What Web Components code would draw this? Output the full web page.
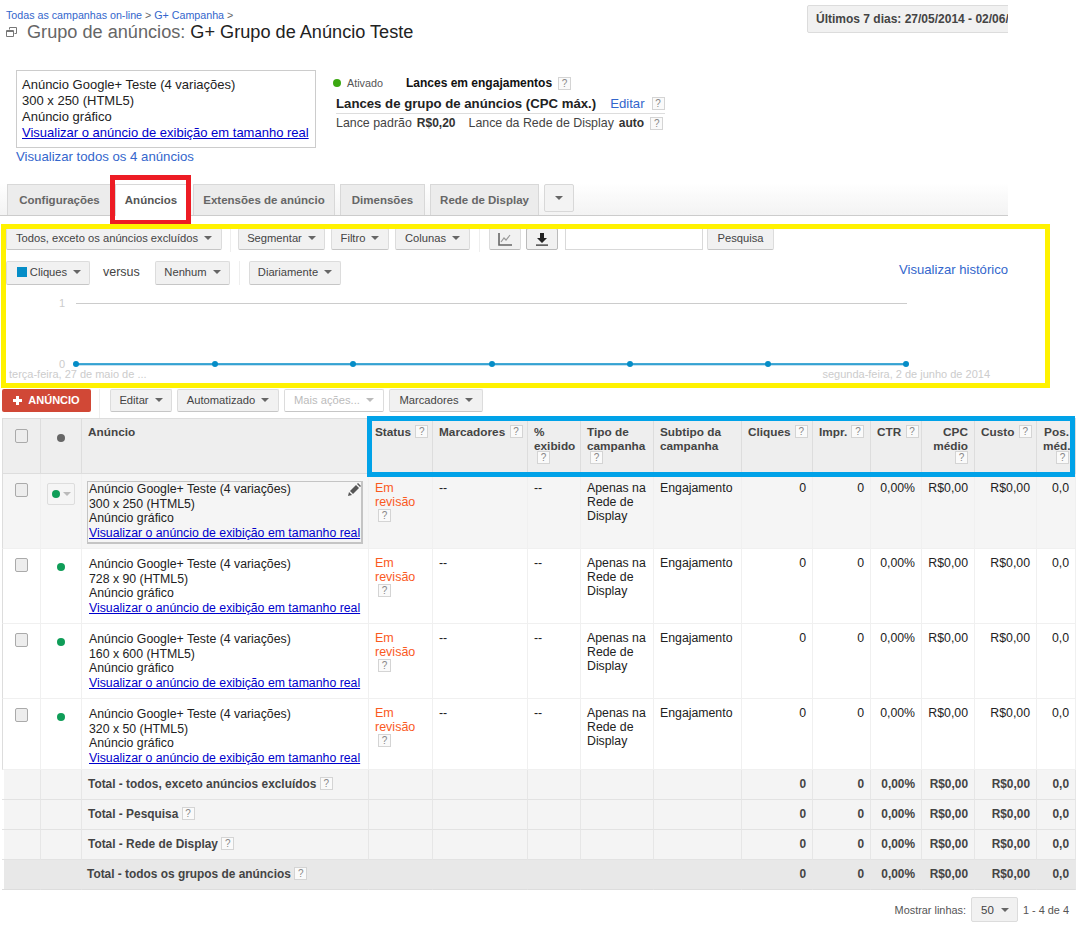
<!DOCTYPE html>
<html lang="pt-BR">
  <head>
    <meta charset="UTF-8" />
    <title>Grupo de anúncios</title>
    <style>
      body {
        margin: 0;
        background: #fff;
        font: 12px "Liberation Sans", Arial, sans-serif;
        color: #222;
      }
      #page {
        position: relative;
        width: 1076px;
        height: 933px;
        overflow: hidden;
      }
    </style>
  </head>
  <body>
    <div id="page">
      <ad-header></ad-header>
      <ad-summary></ad-summary>
      <ad-tabs></ad-tabs>
      <ad-chart-panel></ad-chart-panel>
      <ad-actions></ad-actions>
      <ad-table></ad-table>
      <ad-footer></ad-footer>
      <mark-rect style="left: 110px; top: 175px; width: 81px; height: 50px; color: #ed1c24"></mark-rect>
      <mark-rect style="left: 1px; top: 224px; width: 1049px; height: 164px; color: #fff200"></mark-rect>
      <mark-rect style="left: 367px; top: 416px; width: 708px; height: 61px; color: #00a2e8"></mark-rect>
    </div>

    <script>
      // small helper, every element gets an open shadow root with its markup
      function comp(name, html) {
        customElements.define(
          name,
          class extends HTMLElement {
            constructor() {
              super();
              this.attachShadow({ mode: "open" }).innerHTML = html;
            }
          }
        );
      }

      comp(
        "mark-rect",
        `<style>
          :host { position: absolute; box-sizing: border-box; border: 5px solid currentColor; }
        </style>`
      );

      comp(
        "help-mark",
        `<style>
          :host {
            display: inline-block; box-sizing: border-box; width: 13px; height: 13px;
            border: 1px solid #d4d4d4; background: #fafafa; color: #888;
            font: 10px/11px "Liberation Sans", Arial, sans-serif; text-align: center;
            vertical-align: top; font-weight: normal;
          }
        </style>?`
      );

      comp(
        "status-dot",
        `<style>
          :host { display: inline-block; width: 8px; height: 8px; border-radius: 50%; background: #0f9d58; }
        </style>`
      );

      comp(
        "drop-arrow",
        `<style>
          :host {
            display: inline-block; width: 0; height: 0; margin-left: 6px; vertical-align: middle;
            border-left: 4px solid transparent; border-right: 4px solid transparent;
            border-top: 4px solid #666;
          }
        </style>`
      );

      comp(
        "drop-button",
        `<style>
          :host {
            display: flex; box-sizing: border-box; height: 24px; flex: none; padding-bottom: 2px;
            align-items: center; justify-content: center; white-space: nowrap;
            background: #f1f1f1; border: 1px solid #dcdcdc; border-bottom-color: #c6c6c6;
            border-radius: 2px; color: #444;
            font: 11.2px "Liberation Sans", Arial, sans-serif;
          }
          :host([disabled]) { background: #fff; color: #bbb; }
          :host([flat]) { height: 22px; }
        </style><slot></slot>`
      );

      comp(
        "ad-header",
        `<style>
          :host { display: flex; width: 1008px; height: 62px; overflow: hidden; }
          .left { flex: none; width: 807px; padding: 9px 0 0 6px; box-sizing: border-box; }
          .crumbs { font-size: 10.7px; line-height: 13px; color: #666; }
          .crumbs a { color: #36c; text-decoration: none; }
          h1 { display: flex; align-items: center; margin: 0; font-size: 18.15px; font-weight: normal; line-height: 20px; color: #222; }
          h1 svg { margin: 1px 10px 0 0; }
          h1 span { color: #666; margin-right: 5px; }
          .date {
            flex: none; box-sizing: border-box; height: 28px; margin-top: 5px; padding: 0 8px;
            background: #f1f1f1; border: 1px solid #dcdcdc; border-radius: 2px;
            font-size: 12px; font-weight: bold; line-height: 26px; color: #444; white-space: nowrap;
          }
        </style>
        <div class="left">
          <div class="crumbs"><a>Todas as campanhas on-line</a> &gt; <a>G+ Campanha</a> &gt;</div>
          <h1>
            <svg width="11" height="11" viewBox="0 0 11 11" fill="none" stroke="#777">
              <path d="M3.5 2.5V.5h7v6H8.5" />
              <path d="M.5 3.5h7v6h-7z" />
              <path d="M.5 4.5h7" />
            </svg>
            <span>Grupo de anúncios:</span> G+ Grupo de Anúncio Teste
          </h1>
        </div>
        <div class="date">Últimos 7 dias: 27/05/2014 - 02/06/2014</div>`
      );

      comp(
        "ad-summary",
        `<style>
          :host { display: flex; width: 1008px; height: 121px; box-sizing: border-box; padding: 8px 0 0 16px; font-size: 12px; }
          .box {
            box-sizing: border-box; width: 300px; height: 78px; padding: 6px 5px;
            border: 1px solid #ccc; font-size: 13px; line-height: 16px; white-space: nowrap; color: #222;
          }
          .box a { color: #00c; text-decoration: underline; }
          .all { display: block; margin-top: 1px; font-size: 13.2px; line-height: 16px; color: #36c; }
          .info { margin-left: 20px; width: 329px; white-space: nowrap; }
          .state { display: flex; align-items: center; box-sizing: border-box; height: 24px; padding-top: 2px; }
          .state status-dot { background: #3ba811; margin-left: -3px; }
          .state .on { margin-left: 6px; width: 59px; font-size: 10.8px; color: #555; }
          .state b { margin-right: 6px; color: #111; }
          .bid {
            display: flex; align-items: center; height: 19px; border-bottom: 1px solid #ddd;
            font-size: 13.2px; font-weight: bold; color: #222;
          }
          .bid a { margin: 0 7px 0 14px; font-weight: normal; color: #36c; }
          .def { display: flex; align-items: center; margin-top: 1px; height: 16px; font-size: 12.4px; color: #444; }
          .def b { margin-left: 5px; font-size: 12px; color: #333; }
          .def span { margin-left: 13px; }
          .def help-mark { margin-left: 6px; }
        </style>
        <div>
          <div class="box">
            Anúncio Google+ Teste (4 variações)<br />
            300 x 250 (HTML5)<br />
            Anúncio gráfico<br />
            <a>Visualizar o anúncio de exibição em tamanho real</a>
          </div>
          <a class="all">Visualizar todos os 4 anúncios</a>
        </div>
        <div class="info">
          <div class="state"><status-dot></status-dot><span class="on">Ativado</span><b>Lances em engajamentos</b><help-mark></help-mark></div>
          <div class="bid">Lances de grupo de anúncios (CPC máx.)<a>Editar</a><help-mark></help-mark></div>
          <div class="def">Lance padrão<b>R$0,20</b><span>Lance da Rede de Display</span><b>auto</b><help-mark></help-mark></div>
        </div>`
      );

      comp(
        "ad-tabs",
        `<style>
          :host {
            display: flex; width: 1008px; height: 33px; box-sizing: border-box; padding: 1px 0 0 7px; gap: 5px;
            background: linear-gradient(#fff, #f3f3f3); border-bottom: 1px solid #ccc;
            font-size: 11.5px; font-weight: bold; color: #666;
          }
          div {
            box-sizing: border-box; height: 31px; flex: none; text-align: center; line-height: 30px;
            background: #ececec; border: 1px solid #d8d8d8; border-bottom: 0;
          }
          .on { background: #fff; color: #555; height: 32px; }
          .more { height: 28px; line-height: 24px; background: #f3f3f3; border-bottom: 1px solid #d8d8d8; border-radius: 2px; }
          .more drop-arrow { margin: 0; }
        </style>
        <div style="width: 105px">Configurações</div>
        <div class="on" style="width: 72px; margin-left: -2px">Anúncios</div>
        <div style="width: 142px; margin-left: 1px">Extensões de anúncio</div>
        <div style="width: 85px">Dimensões</div>
        <div style="width: 109px">Rede de Display</div>
        <div class="more" style="width: 30px"><drop-arrow></drop-arrow></div>`
      );

      comp(
        "ad-chart-panel",
        `<style>
          :host { display: block; width: 1008px; height: 172px; overflow: hidden; box-sizing: border-box; padding: 12px 0 0 6px; }
          .row { display: flex; align-items: flex-start; height: 33px; }
          .sep { flex: none; width: 1px; height: 24px; background: #eee; margin: 0 7px 0 8px; }
          .gap { margin-left: 6px; }
          .icon { background: #f1f1f1; border-bottom-color: #bbb; padding-bottom: 0; }
          input {
            box-sizing: border-box; width: 138px; height: 22px; margin: 0 4px 0 7px;
            border: 1px solid #d9d9d9; background: #fff;
          }
          .versus { width: 38px; margin: 2px 14px 0 13px; font-size: 12.5px; line-height: 18px; color: #444; }
          .sq { display: inline-block; width: 10px; height: 10px; margin: -1px 3px 0 2px; background: #058dc7; }
          .hist { margin: 0 0 0 auto; padding-top: 1px; font-size: 13.1px; line-height: 16px; white-space: nowrap; color: #36c; }
          svg { display: block; margin: -9px 0 0 -6px; }
          text { font: 11px "Liberation Sans", Arial, sans-serif; fill: #ccc; }
        </style>
        <div class="row">
          <drop-button flat style="width: 216px">Todos, exceto os anúncios excluídos<drop-arrow></drop-arrow></drop-button>
          <span class="sep"></span>
          <drop-button flat style="width: 87px">Segmentar<drop-arrow></drop-arrow></drop-button>
          <drop-button flat class="gap" style="width: 58px">Filtro<drop-arrow></drop-arrow></drop-button>
          <drop-button flat class="gap" style="width: 75px">Colunas<drop-arrow></drop-arrow></drop-button>
          <span class="sep" style="margin: 0 9px"></span>
          <drop-button flat class="icon" style="width: 32px">
            <svg style="margin: 0" width="14" height="13" viewBox="0 0 14 13" fill="none" stroke="#666">
              <path stroke-width="1.6" d="M1 0v12h13" />
              <path stroke="#999" stroke-width="1.2" d="M3 9l3-4 2 2 4-5" />
            </svg>
          </drop-button>
          <drop-button flat class="icon" style="width: 32px; margin-left: 5px; border-color: #bbb">
            <svg style="margin: 0" width="14" height="13" viewBox="0 0 14 13" fill="#222">
              <path d="M5 0h4v5h3L7 10 2 5h3z" />
              <path d="M1 11.5h12v1.2H1z" />
            </svg>
          </drop-button>
          <input />
          <drop-button flat style="width: 67px">Pesquisa</drop-button>
        </div>
        <div class="row">
          <drop-button style="width: 84px"><span class="sq"></span>Cliques<drop-arrow></drop-arrow></drop-button>
          <span class="versus">versus</span>
          <drop-button style="width: 75px">Nenhum<drop-arrow></drop-arrow></drop-button>
          <span class="sep" style="margin: 0 9px"></span>
          <drop-button style="width: 92px">Diariamente<drop-arrow></drop-arrow></drop-button>
          <a class="hist">Visualizar histórico</a>
        </div>
        <svg width="1008" height="103" viewBox="0 0 1008 103">
          <text x="59" y="22">1</text>
          <text x="59" y="83">0</text>
          <path d="M76 18.5h831" stroke="#ccc" fill="none" />
          <path d="M76 80h831" stroke="#8cc6e3" fill="none" />
          <path d="M76 79h831" stroke="#058dc7" stroke-width="1.5" fill="none" />
          <g fill="#058dc7">
            <circle cx="76" cy="79" r="3" />
            <circle cx="215" cy="79" r="3" />
            <circle cx="353" cy="79" r="3" />
            <circle cx="492" cy="79" r="3" />
            <circle cx="630" cy="79" r="3" />
            <circle cx="768" cy="79" r="3" />
            <circle cx="906" cy="79" r="3" />
          </g>
          <text x="9" y="93">terça-feira, 27 de maio de ...</text>
          <text x="990" y="93" text-anchor="end">segunda-feira, 2 de junho de 2014</text>
        </svg>`
      );

      comp(
        "ad-actions",
        `<style>
          :host { display: flex; height: 30px; box-sizing: border-box; padding: 1px 0 0 2px; }
          .add {
            display: flex; align-items: center; justify-content: center; box-sizing: border-box;
            width: 89px; height: 23px; padding-bottom: 1px; background: #d14836; border-radius: 2px; color: #fff;
            font-size: 11px; font-weight: bold;
          }
          .add svg { margin: 1px 6px 0 0; }
          .sep { width: 1px; height: 29px; margin: 0 10px 0 8px; background: #eee; }
          drop-button { height: 23px; margin-right: 5px; }
        </style>
        <div class="add">
          <svg width="9" height="9" viewBox="0 0 9 9" fill="#fff"><path d="M3 0h3v3h3v3H6v3H3V6H0V3h3z" /></svg>ANÚNCIO
        </div>
        <span class="sep"></span>
        <drop-button style="width: 62px">Editar<drop-arrow></drop-arrow></drop-button>
        <drop-button style="width: 102px">Automatizado<drop-arrow></drop-arrow></drop-button>
        <drop-button disabled style="width: 100px">Mais ações...<drop-arrow style="border-top-color: #bbb"></drop-arrow></drop-button>
        <drop-button style="width: 94px">Marcadores<drop-arrow></drop-arrow></drop-button>`
      );

      comp(
        "row-check",
        `<style>
          :host {
            display: block; box-sizing: border-box; width: 13px; height: 14px; margin: 2px auto 0;
            border: 1px solid #aaa; border-radius: 2px; background: #ededed;
          }
        </style>`
      );

      comp(
        "ad-cell",
        `<style>
          :host { display: block; margin-top: 1px; white-space: nowrap; font-size: 12.3px; line-height: 14.5px; color: #222; }
          :host([active]) {
            position: relative; box-sizing: border-box; width: 276px; height: 63px; margin: 0 0 -4px -2px;
            padding-left: 1px; border: 1px solid #c4c4c4; border-width: 1px 2px 2px 1px;
          }
          a { color: #00c; text-decoration: underline; }
          svg { display: none; position: absolute; top: 1px; right: 0; }
          :host([active]) svg { display: block; }
        </style>
        <svg width="13" height="13" viewBox="0 0 13 13" fill="#555">
          <path d="M0 13l1-4 3 3z" />
          <path d="M2 8l6-6 3 3-6 6z" />
          <path d="M9 1l1-1 3 3-1 1z" />
        </svg>
        <slot></slot><br />
        <slot name="size"></slot><br />
        Anúncio gráfico<br />
        <a>Visualizar o anúncio de exibição em tamanho real</a>`
      );

      const metrics = `<td class="n">0</td><td class="n">0</td><td class="n">0,00%</td><td class="n">R$0,00</td><td class="n">R$0,00</td><td class="n">0,0</td>`;

      function adRow(size, first, height) {
        return `<tr class="${first ? "hover" : ""}" style="height: ${height}px">
          <td class="c"><row-check></row-check></td>
          <td class="c">${
            first
              ? `<span class="pick"><status-dot></status-dot><drop-arrow style="border-top-color: #bbb; margin-left: 3px"></drop-arrow></span>`
              : `<status-dot style="margin-top: 7px"></status-dot>`
          }</td>
          <td class="ad"><ad-cell ${first ? "active" : ""}>Anúncio Google+ Teste (4 variações)<span slot="size">${size}</span></ad-cell></td>
          <td><span class="rev">Em revisão</span><br /><help-mark></help-mark></td>
          <td>--</td>
          <td>--</td>
          <td>Apenas na Rede de Display</td>
          <td>Engajamento</td>
          ${metrics}
        </tr>`;
      }

      function totalRow(label, last) {
        return `<tr class="${last ? "total last" : "total"}" style="height: 30px">
          <td></td><td></td>
          <td class="lbl">${label} <help-mark></help-mark></td>
          <td></td><td></td><td></td><td></td><td></td>
          ${metrics}
        </tr>`;
      }

      comp(
        "ad-table",
        `<style>
          :host { display: block; height: 472px; box-sizing: border-box; padding-left: 2px; overflow: hidden; }
          table {
            table-layout: fixed; width: 1074px; border-collapse: separate; border-spacing: 0;
            font-size: 12.3px; line-height: 14px; color: #222;
          }
          th, td { box-sizing: border-box; padding: 7px 6px; vertical-align: top; border-right: 1px solid #f0f0f0; border-bottom: 1px solid #f0f0f0; }
          th {
            background: #eee; border-top: 1px solid #ddd; border-right-color: #ddd; border-bottom-color: #ddd;
            text-align: left; font-size: 11.8px; font-weight: bold; color: #444; padding-top: 6px;
          }
          th.r, td.n { text-align: right; }
          th.one { white-space: nowrap; padding-right: 0; }
          td.c, th.c { text-align: center; padding-left: 0; padding-right: 0; }
          td.ad { padding: 7px 0 0 7px; }
          tr > :first-child { border-left: 1px solid #ddd; }
          .hover td { background: #f5f5f5; }
          .rev { color: #fa5a1e; font-size: 12.5px; }
          .pick {
            display: inline-flex; align-items: center; justify-content: center; box-sizing: border-box;
            width: 28px; height: 22px; margin-top: 2px; border: 1px solid #ddd; border-radius: 2px;
          }
          th help-mark { display: block; margin: -2px 0 0 3px; }
          th help-mark.in { display: inline-block; margin: 0 0 0 1px; }
          th.r help-mark { margin: -2px 0 0 auto; }
          td help-mark { margin: 0 0 0 3px; }
          .total td {
            padding-top: 7px; background: #f4f4f4; border-right-color: #e6e6e6; border-bottom-color: #e2e2e2;
            font-size: 11.9px; font-weight: bold; color: #444;
          }
          .total td:first-child { border-left: 0; background: linear-gradient(to right, #fff 2px, #f4f4f4 2px); }
          .total.last td { background: #e8e8e8; border-right-color: #e8e8e8; border-bottom-color: #ddd; }
          .total.last td:first-child { background: linear-gradient(to right, #fff 2px, #e8e8e8 2px); }
          .total.last .lbl { padding-left: 5px; }
          .lbl { white-space: nowrap; }
          .lbl help-mark { margin: 0; }
        </style>
        <table>
          <colgroup>
            <col style="width: 39px" /><col style="width: 41px" /><col style="width: 287px" /><col style="width: 64px" />
            <col style="width: 95px" /><col style="width: 53px" /><col style="width: 73px" /><col style="width: 88px" />
            <col style="width: 71px" /><col style="width: 58px" /><col style="width: 51px" /><col style="width: 53px" />
            <col style="width: 62px" /><col style="width: 39px" />
          </colgroup>
          <tr style="height: 56px">
            <th class="c"><row-check style="margin-top: 4px"></row-check></th>
            <th class="c"><status-dot style="background: #666; margin-top: 9px"></status-dot></th>
            <th>Anúncio</th>
            <th class="one">Status <help-mark class="in"></help-mark></th>
            <th class="one">Marcadores <help-mark class="in"></help-mark></th>
            <th>% exibido<help-mark></help-mark></th>
            <th>Tipo de campanha<help-mark></help-mark></th>
            <th>Subtipo da campanha</th>
            <th class="one">Cliques <help-mark class="in"></help-mark></th>
            <th class="one">Impr. <help-mark class="in"></help-mark></th>
            <th class="one">CTR <help-mark class="in"></help-mark></th>
            <th class="r">CPC médio<help-mark></help-mark></th>
            <th class="one">Custo <help-mark class="in"></help-mark></th>
            <th class="r">Pos. méd.<help-mark></help-mark></th>
          </tr>
          ${adRow("300 x 250 (HTML5)", true, 75)}
          ${adRow("728 x 90 (HTML5)", false, 75)}
          ${adRow("160 x 600 (HTML5)", false, 75)}
          ${adRow("320 x 50 (HTML5)", false, 71)}
          ${totalRow("Total - todos, exceto anúncios excluídos")}
          ${totalRow("Total - Pesquisa")}
          ${totalRow("Total - Rede de Display")}
          ${totalRow("Total - todos os grupos de anúncios", true)}
        </table>`
      );

      comp(
        "ad-footer",
        `<style>
          :host {
            display: flex; align-items: center; justify-content: flex-end; box-sizing: border-box;
            height: 25px; margin-top: 7px; padding-right: 7px; font-size: 10.9px; color: #555;
          }
          .sel {
            display: flex; align-items: center; justify-content: space-between; box-sizing: border-box;
            width: 47px; height: 25px; margin: 0 5px 0 5px; padding: 0 8px 0 9px;
            background: #f1f1f1; border: 1px solid #dcdcdc; border-radius: 2px; color: #444; font-size: 11.5px;
          }
        </style>
        Mostrar linhas:
        <div class="sel">50<drop-arrow></drop-arrow></div>
        1 - 4 de 4`
      );
    </script>
  </body>
</html>
